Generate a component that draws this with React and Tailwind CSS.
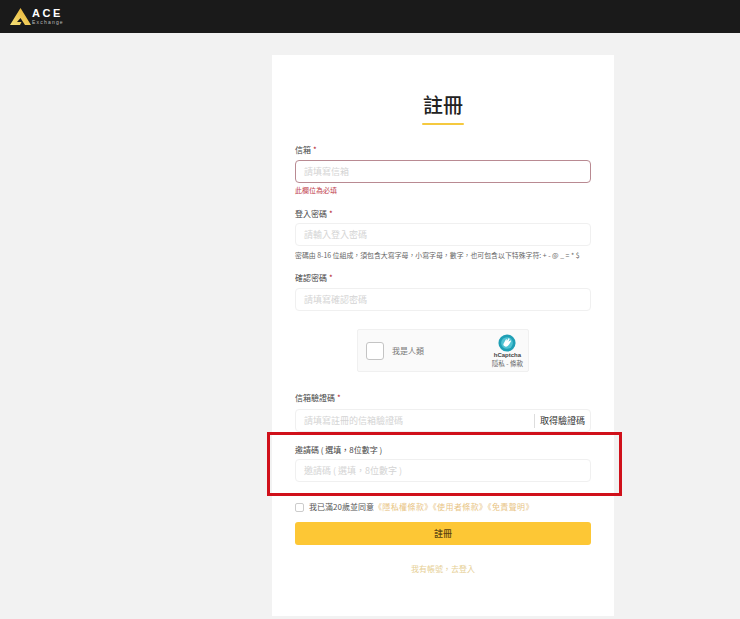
import React from 'react';

const font = { fontFamily: '"Noto Sans CJK TC", "Noto Sans", sans-serif' };

const Field = ({ label, required, placeholder, error, className = '', gap = 'mt-[4px]', children }) => (
    <div className={className}>
        <label className="block h-[11px] text-[8px] leading-[11px] text-[#444]">
            {label}
            {required && <span className="ml-[2px] text-[#b3202c]">*</span>}
        </label>
        <div className={`${gap} flex h-[23px] items-center rounded-[4px] border bg-white ${error ? 'border-[#b98a92]' : 'border-[#f0f0f0]'}`}>
            <span className="flex-1 whitespace-nowrap pl-[8px] text-[9px] text-[#d4d4d4]">{placeholder}</span>
            {children}
        </div>
    </div>
);

const Logo = () => (
    <div className="flex items-center gap-[1px]">
        <svg width="21" height="17" viewBox="0 0 21 17">
            <defs>
                <linearGradient id="ace" x1="0" y1="1" x2="1" y2="0">
                    <stop offset="0" stopColor="#f4e27a" />
                    <stop offset="1" stopColor="#e9ae2c" />
                </linearGradient>
            </defs>
            <path d="M10.5 0 L21 17 L15 17 L10.5 10 L7 14 L11.5 14 L10 17 L0 17 Z" fill="url(#ace)" />
        </svg>
        <div className="flex flex-col text-white">
            <span className="text-[11px] font-semibold leading-[11px] tracking-[2.6px]" style={{ fontFamily: '"Liberation Sans", sans-serif' }}>ACE</span>
            <span className="text-[5px] leading-[6px] tracking-[1.2px] text-[#bdbdbd]" style={{ fontFamily: '"Liberation Sans", sans-serif' }}>Exchange</span>
        </div>
    </div>
);

const Captcha = () => (
    <div className="mx-auto mt-[18px] flex h-[43px] w-[172px] items-center rounded-[2px] border border-[#f0f0f0] bg-[#fafafa] pl-[8px] pr-[5px]">
        <span className="h-[18px] w-[18px] rounded-[3px] border border-[#c4c4c4] bg-white" />
        <span className="ml-[8px] flex-1 text-[8px] text-[#777]">我是人類</span>
        <div className="flex flex-col items-center">
            <svg width="18" height="18" viewBox="0 0 20 20">
                <circle cx="10" cy="10" r="9.5" fill="#1f9fb5" />
                <circle cx="10" cy="10" r="6.5" fill="#4fc3d3" />
                <path d="M6 11 L9 5.5 L10 6.5 L9.5 8 L12 4.5 L13 5.5 L11.5 8.5 L14 7 L14.5 8 L12.5 11.5 Q10.5 15 8 14 Q5.5 13.5 6 11 Z" fill="#fff" />
            </svg>
            <span className="text-[6px] font-bold leading-[7px] text-[#444]" style={{ fontFamily: '"Liberation Sans", sans-serif' }}>hCaptcha</span>
            <span className="text-[6.5px] leading-[8px] text-[#666]">隱私 - 條款</span>
        </div>
    </div>
);

export default function App() {
    return (
        <div className="relative h-[619px] w-[740px] overflow-hidden bg-[#f2f2f2]" style={font}>
            <header className="flex h-[33px] items-center bg-[#1a1a1a] pl-[10px]">
                <Logo />
            </header>

            <main className="ml-[272px] mt-[22px] h-[561px] w-[342px] bg-white px-[23px] pt-[34px]">
                <h1 className="text-center text-[20px] font-medium leading-[32px] text-[#222]">註冊</h1>
                <div className="mx-auto mt-[2px] h-[2px] w-[42px] rounded bg-[#f5c93f]" />

                <Field className="mt-[19px]" gap="mt-[5px]" label="信箱" required placeholder="請填寫信箱" error />
                <p className="mt-[2px] h-[10px] text-[7px] leading-[10px] text-[#c0404a]">此欄位為必填</p>

                <Field className="mt-[13px]" label="登入密碼" required placeholder="請輸入登入密碼" />
                <p className="mt-[3px] h-[12px] whitespace-nowrap text-[6.9px] leading-[12px] text-[#666]">
                    {'密碼由 8-16 位組成\uFF0C須包含大寫字母\uFF0C小寫字母\uFF0C數字\uFF0C也可包含以下特殊字符: + - @ _ = * $'}
                </p>

                <Field className="mt-[11px]" gap="mt-[5px]" label="確認密碼" required placeholder="請填寫確認密碼" />

                <Captcha />

                <Field className="mt-[20px]" gap="mt-[6px]" label="信箱驗證碼" required placeholder="請填寫註冊的信箱驗證碼">
                    <span className="flex h-[14px] items-center border-l border-[#ddd] px-[5px] text-[9px] text-[#333]">取得驗證碼</span>
                </Field>

                <Field className="mt-[12px]" label={'邀請碼 ( 選填\uFF0C8位數字 )'} placeholder={'邀請碼 ( 選填\uFF0C8位數字 )'} />

                <div className="mt-[19px] flex h-[12px] items-center text-[8px] text-[#555]">
                    <span className="h-[9px] w-[9px] rounded-[2px] border border-[#ccc] bg-white" />
                    <span className="ml-[5px]">我已滿20歲並同意</span>
                    <span className="tracking-[0.4px] text-[#e8c484]">《隱私權條款》《使用者條款》《免責聲明》</span>
                </div>

                <button className="mt-[9px] flex h-[23px] w-full items-center justify-center rounded-[3px] bg-[#fdc735] text-[9px] font-medium text-[#5a4310]">註冊</button>

                <p className="mt-[18px] text-center text-[8px] leading-[12px] text-[#e6cf95]">{'我有帳號\uFF0C去登入'}</p>
            </main>

            {/* red highlight drawn over the screenshot */}
            <div className="absolute left-[267px] top-[432px] h-[64px] w-[355px] border-[3px] border-[#d0101a]" />
        </div>
    );
}
